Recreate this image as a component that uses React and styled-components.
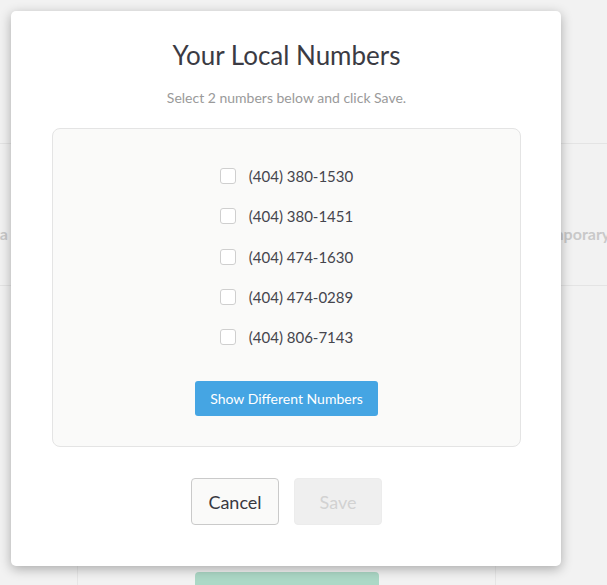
import React, { useState } from "react";
import styled, { createGlobalStyle } from "styled-components";

const GlobalStyle = createGlobalStyle`
  html, body {
    margin: 0;
    padding: 0;
    background: #f2f2f2;
    font-family: Lato, "Open Sans", sans-serif;
  }
`;

const Page = styled.div`
  position: relative;
  width: 607px;
  height: 585px;
  overflow: hidden;
  background: #f2f2f2;
`;

const Underlay = styled.div`
  display: flex;
  flex-direction: column;
  padding-top: 143px;
`;

const BackRow = styled.div`
  display: flex;
  align-items: center;
  height: 143px;
  padding-top: 38px;
  box-sizing: border-box;
  border-top: 1px solid #e4e4e4;
  border-bottom: 1px solid #e4e4e4;
  font-size: 16px;
  font-weight: 700;
  color: #c9c9c9;
  white-space: nowrap;
`;

const BackLeft = styled.div`
  display: flex;
  justify-content: flex-end;
  width: 8px;
`;

const BackRight = styled.div`
  margin-left: 526px;
`;

const BackColumns = styled.div`
  margin-left: 77px;
  width: 419px;
  height: 320px;
  border-left: 1px solid #e6e6e6;
  border-right: 1px solid #e6e6e6;
  display: flex;
  justify-content: center;
  padding-top: 286px;
  box-sizing: border-box;
`;

const BackButton = styled.div`
  width: 184px;
  height: 30px;
  border-radius: 4px;
  background: #acd8c6;
`;

const Modal = styled.div`
  position: absolute;
  left: 11px;
  top: 11px;
  width: 550px;
  height: 555px;
  box-sizing: border-box;
  background: #fff;
  border-radius: 5px;
  box-shadow: 0 3px 12px rgba(0, 0, 0, 0.3);
  padding: 29px 40px 0 41px;
  display: flex;
  flex-direction: column;
  align-items: stretch;
`;

const Title = styled.h2`
  margin: 0;
  font-size: 26px;
  line-height: 31px;
  font-weight: 400;
  color: #3b3b43;
  text-align: center;
`;

const Subtitle = styled.p`
  margin: 17px 0 20px;
  font-size: 14px;
  line-height: 20px;
  color: #9a9a9a;
  text-align: center;
`;

const NumbersBox = styled.div`
  height: 319px;
  box-sizing: border-box;
  background: #fafaf9;
  border: 1px solid #e4e4e4;
  border-radius: 8px;
  padding-top: 27px;
  display: flex;
  flex-direction: column;
  align-items: center;
`;

const List = styled.div`
  display: flex;
  flex-direction: column;
  align-items: flex-start;
`;

const Row = styled.label`
  display: flex;
  align-items: center;
  gap: 13px;
  height: 40.25px;
  font-size: 15px;
  color: #45454d;
  cursor: pointer;
`;

const Box = styled.span`
  width: 16px;
  height: 16px;
  box-sizing: border-box;
  border: 1px solid #cfcfcf;
  border-radius: 3px;
  background: ${(p) => (p.checked ? "#45a5e3" : "#fff")};
`;

const BlueButton = styled.button`
  margin-top: 24px;
  height: 35px;
  padding: 0 15px;
  border: none;
  border-radius: 3px;
  background: #45a5e3;
  color: #fff;
  font-family: Lato, sans-serif;
  font-size: 14px;
  cursor: pointer;
`;

const Footer = styled.div`
  display: flex;
  justify-content: center;
  gap: 15px;
  margin-top: 31px;
`;

const FooterButton = styled.button`
  width: 88px;
  height: 47px;
  box-sizing: border-box;
  border-radius: 4px;
  font-family: Lato, sans-serif;
  font-size: 18px;
  border: 1px solid ${(p) => (p.disabled ? "#ececec" : "#cacaca")};
  background: ${(p) => (p.disabled ? "#efefef" : "#fafaf9")};
  color: ${(p) => (p.disabled ? "#d2d2d2" : "#38383f")};
  cursor: ${(p) => (p.disabled ? "default" : "pointer")};
`;

const numbers = [
  "(404) 380-1530",
  "(404) 380-1451",
  "(404) 474-1630",
  "(404) 474-0289",
  "(404) 806-7143",
];

const App = () => {
  const [picked, setPicked] = useState([]);

  const toggle = (n) => {
    setPicked((prev) =>
      prev.includes(n) ? prev.filter((x) => x !== n) : [...prev, n]
    );
  };

  return (
    <Page>
      <GlobalStyle />
      <Underlay>
        <BackRow>
          <BackLeft>Data</BackLeft>
          <BackRight>Temporary</BackRight>
        </BackRow>
        <BackColumns>
          <BackButton />
        </BackColumns>
      </Underlay>

      <Modal>
        <Title>Your Local Numbers</Title>
        <Subtitle>Select 2 numbers below and click Save.</Subtitle>
        <NumbersBox>
          <List>
            {numbers.map((n) => (
              <Row key={n} onClick={() => toggle(n)}>
                <Box checked={picked.includes(n)} />
                {n}
              </Row>
            ))}
          </List>
          <BlueButton>Show Different Numbers</BlueButton>
        </NumbersBox>
        <Footer>
          <FooterButton>Cancel</FooterButton>
          <FooterButton disabled={picked.length !== 2}>Save</FooterButton>
        </Footer>
      </Modal>
    </Page>
  );
};

export default App;
